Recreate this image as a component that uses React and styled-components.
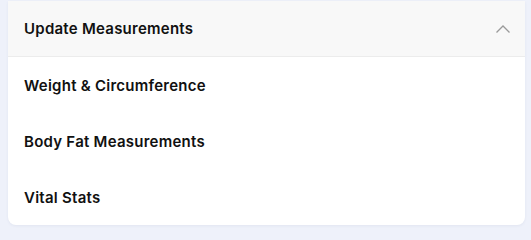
import React from "react";
import styled, { createGlobalStyle } from "styled-components";

const GlobalStyle = createGlobalStyle`
  html, body {
    margin: 0;
    padding: 0;
    background: #eef1fa;
  }
  body {
    font-family: Inter, "Noto Sans", sans-serif;
    color: #111;
  }
`;

const Page = styled.div`
  padding: 1px 6px 8px 8px;
`;

const Card = styled.div`
  background: #fff;
  border-radius: 0 0 8px 8px;
  overflow: hidden;
  box-shadow: 0 1px 3px rgba(40, 50, 100, 0.06);
`;

const Header = styled.button`
  display: flex;
  align-items: center;
  justify-content: space-between;
  width: 100%;
  height: 56px;
  padding: 0 14px 0 16px;
  border: none;
  border-bottom: 1px solid #ececec;
  background: #f8f8f8;
  font: inherit;
  cursor: pointer;
`;

const Title = styled.span`
  font-size: 15px;
  font-weight: 600;
  color: #111;
  letter-spacing: 0.25px;
`;

const Item = styled.div`
  display: flex;
  align-items: center;
  height: 56px;
  padding: 0 16px;
  font-size: 15px;
  font-weight: 600;
  color: #111;
  letter-spacing: 0.25px;
`;

const Chevron = () => (
  <svg width="16" height="10" viewBox="0 0 16 10" fill="none">
    <path d="M1.5 8.5 L8 2 L14.5 8.5" stroke="#9a9a9a" strokeWidth="1.3" />
  </svg>
);

const items = ["Weight & Circumference", "Body Fat Measurements", "Vital Stats"];

export default function App() {
  return (
    <>
      <GlobalStyle />
      <Page>
        <Card>
          <Header>
            <Title>Update Measurements</Title>
            <Chevron />
          </Header>
          {items.map((label) => (
            <Item key={label}>{label}</Item>
          ))}
        </Card>
      </Page>
    </>
  );
}
